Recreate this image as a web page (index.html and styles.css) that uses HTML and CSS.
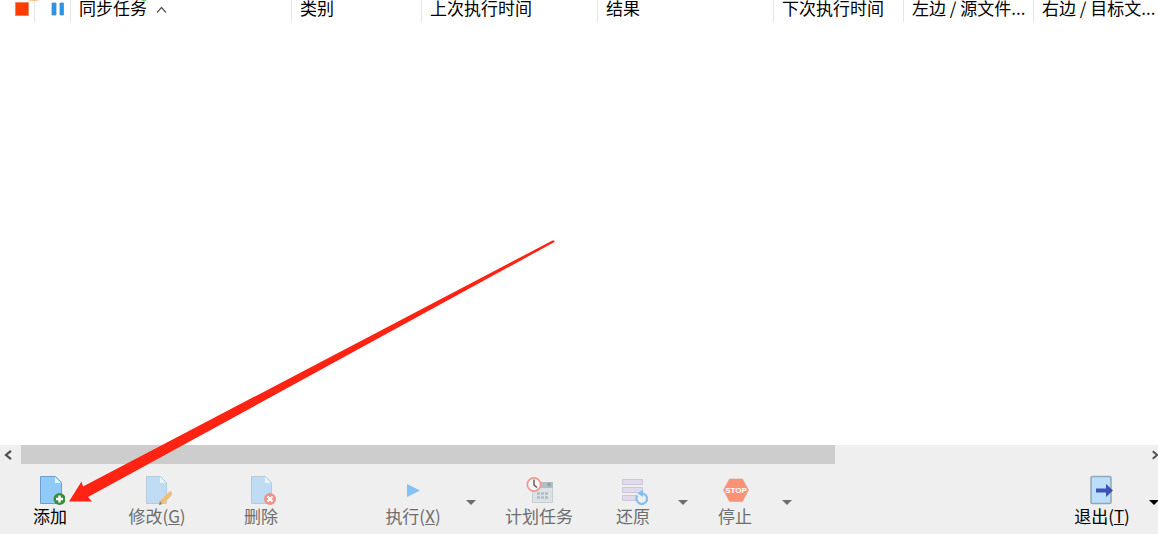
FILE: index.html
```html
<!DOCTYPE html>
<html lang="zh-CN">
<head>
  <meta charset="UTF-8">
  <meta name="viewport" content="width=device-width, initial-scale=1.0">
  <title>同步任务</title>
  <link rel="stylesheet" href="styles.css">
</head>
<body>
<div class="window">
  <div class="task-list">
    <table class="tasks">
      <colgroup>
        <col class="col-stop"><col class="col-pause"><col class="col-name"><col class="col-type"><col class="col-time"><col class="col-time"><col class="col-side"><col class="col-side"><col>
      </colgroup>
      <thead>
        <tr>
          <th class="mark-cell"><svg class="mark" width="14" height="14" viewBox="0 0 14 14"><path fill="#ff3d00" stroke="#d9735a" stroke-width=".6" d="M.5 .5h13v13H.5z"/></svg></th>
          <th class="mark-cell"><svg class="mark" width="14" height="14" viewBox="0 0 14 14"><path fill="#2196f3" stroke="#5c8cae" stroke-width=".8" d="M2 1h4v12H2zM10 1h3.500v12H10z"/></svg></th>
          <th>同步任务<svg class="sort" width="11" height="8" viewBox="0 0 11 8"><path fill="none" stroke="#555" stroke-width="1.200" d="M1 6.500l4.500-5 4.500 5"/></svg></th>
          <th>类别</th>
          <th>上次执行时间</th>
          <th>结果</th>
          <th>下次执行时间</th>
          <th>左边 / 源文件...</th>
          <th>右边 / 目标文...</th>
        </tr>
      </thead>
    </table>
    <svg class="scraps" width="160" height="3" viewBox="0 0 160 3">
      <path fill="#ffbd80" d="M27 0h13q-6 2-13 0z"/>
      <path fill="#79cf70" d="M141 0h6l-3 2z"/>
    </svg>
  </div>

  <div class="scrollbar">
    <button class="scroll-button" aria-label="向左"><svg width="8" height="10" viewBox="0 0 8 10"><path fill="none" stroke="#505050" stroke-width="2.200" d="M7 .8L2 5l5 4.200"/></svg></button>
    <div class="track"><div class="thumb"></div></div>
    <button class="scroll-button scroll-right" aria-label="向右"><svg width="8" height="10" viewBox="0 0 8 10"><path fill="none" stroke="#505050" stroke-width="2.200" d="M2 .8L7 5 2 9.200"/></svg></button>
  </div>

  <div class="toolbar">
    <button class="tool tool-add">
      <svg class="icon" viewBox="0 0 30 30"><path fill="#90caf9" stroke="#6f9fc8" d="M5.500 1.500h15l6 6v21h-21z"/><path fill="#e1f5fe" d="M20 2v6h6z"/><circle cx="24.500" cy="24" r="6" fill="#388e3c"/><path stroke="#fff" stroke-width="2.400" d="M24.500 20.500v7M21 24h7"/></svg>
      <span>添加</span>
    </button>
    <button class="tool tool-edit" disabled>
      <svg class="icon" viewBox="0 0 30 30"><path fill="#bfdcf4" stroke="#b3cbdd" d="M4.500 1.500h14l6 6v21h-20z"/><path fill="#e9f6fd" d="M18 2v6h6z"/><path fill="#f3bd6c" d="M18 26l9-9 3 3-9 9-4 1z"/><path fill="#efa7a2" d="M27 17l1.500-1 2 2.500-.5 1.500z"/><path fill="#7d878c" d="M18 26l-1 4 3-1z"/></svg>
      <span>修改(<u>G</u>)</span>
    </button>
    <button class="tool tool-delete" disabled>
      <svg class="icon" viewBox="0 0 30 30"><path fill="#bfdcf4" stroke="#b3cbdd" d="M5.500 1.500h14l6 6v21h-20z"/><path fill="#e9f6fd" d="M19 2v6h6z"/><circle cx="24" cy="24" r="6" fill="#f1918b"/><path stroke="#fff" stroke-width="2.200" d="M21.500 21.500l5 5M26.500 21.500l-5 5"/></svg>
      <span>删除</span>
    </button>
    <button class="tool tool-run" disabled>
      <svg class="icon" viewBox="0 0 30 30"><path fill="#82c2f4" d="M9 9l13 6.500L9 22z"/></svg>
      <span>执行(<u>X</u>)</span>
    </button>
    <button class="drop" disabled aria-label="执行选项"></button>
    <button class="tool tool-plan" disabled>
      <svg class="icon" viewBox="0 0 30 30"><path fill="#dce3e6" stroke="#c5ced2" d="M8.500 7.500h20v20h-20z"/><path fill="#b0bec5" d="M8 7h21v6H8z"/><circle cx="25" cy="9.500" r="2" fill="#93a3ab"/><path stroke="#aebbc1" stroke-width="2.500" stroke-dasharray="3 1" d="M13 18.500h11M13 22.500h11"/><circle cx="10" cy="9.500" r="6.700" fill="#f5f5f5" stroke="#ee9993" stroke-width="1.800"/><path fill="none" stroke="#555" stroke-width="1.400" d="M10 4.500V10l3 2.500"/></svg>
      <span>计划任务</span>
    </button>
    <button class="tool tool-restore" disabled>
      <svg class="icon" viewBox="0 0 30 30"><path fill="#e1daed" stroke="#cdc5dc" d="M4.500 4.500h20v5h-20zM4.500 12.500h20v5h-20zM4.500 20.500h20v5h-20z"/><circle cx="24" cy="23.500" r="5.500" fill="#efefef"/><path fill="none" stroke="#81c0ee" stroke-width="2.200" d="M19.500 20.500a5.300 5.300 0 1 0 5.500-2"/><path fill="#81c0ee" d="M25 14.500v7.500l-5.500-3.500z"/></svg>
      <span>还原</span>
    </button>
    <button class="drop" disabled aria-label="还原选项"></button>
    <button class="tool tool-stop" disabled>
      <svg class="icon" viewBox="0 0 30 30"><path fill="#fa9275" stroke="#dca08f" stroke-width=".6" d="M9.500 4h13l6 11-6 11.500h-13L3.500 15z"/><text class="stop-text" x="16" y="18" text-anchor="middle">STOP</text></svg>
      <span>停止</span>
    </button>
    <button class="drop" disabled aria-label="停止选项"></button>
    <button class="tool tool-exit">
      <svg class="icon" viewBox="0 0 30 30"><rect x="4" y="1.500" width="20" height="27" rx="1.500" fill="#bbdefb" stroke="#8fa9b9" stroke-width="1.500"/><path fill="#3f51b5" d="M9 13.500h10V9l7 6.500-7 6.500v-4.500H9z"/></svg>
      <span>退出(<u>T</u>)</span>
    </button>
    <button class="drop drop-exit" aria-label="退出选项"></button>
  </div>

  <svg class="pointer" width="486" height="264" viewBox="69 239 486 264">
    <path fill="#ff2314" d="M69 501.500L81.500 481.500 83 486.500 552.500 240.500Q555 240 554.500 242L88 497 92 501.500z"/>
  </svg>
</div>
</body>
</html>
```
FILE: styles.css
```css
* {
  box-sizing: border-box;
}
body {
  margin: 0;
  background: #fff;
  color: #000;
  font-family: "Noto Sans CJK SC", sans-serif;
  font-size: 17px;
}
button {
  margin: 0;
  padding: 0;
  border: 0;
  background: none;
  color: inherit;
  font: inherit;
}
.window {
  position: relative;
  display: flex;
  flex-direction: column;
  height: 100vh;
  overflow: hidden;
}

/* task list */
.task-list {
  position: relative;
  flex: 1;
}
.tasks {
  width: 100%;
  table-layout: fixed;
  border-collapse: separate;
  border-spacing: 0;
}
.tasks th {
  height: 22px;
  padding: 0 0 6px 8px;
  border-right: 1px solid #e5e5e5;
  font-weight: normal;
  line-height: 16px;
  text-align: left;
  vertical-align: top;
  white-space: nowrap;
}
.tasks th:last-child {
  border-right: 0;
}
.tasks .mark-cell {
  padding-left: 15px;
}
.col-stop {
  width: 35px;
}
.col-pause {
  width: 36px;
}
.col-name {
  width: 221px;
}
.col-type,
.col-side {
  width: 130px;
}
.col-time {
  width: 176px;
}
.mark {
  display: block;
  margin-top: 2px;
}
.sort {
  margin-left: 9px;
  vertical-align: 1px;
}
.scraps {
  position: absolute;
  top: 0;
  left: 0;
}

/* horizontal scrollbar */
.scrollbar {
  display: flex;
  height: 20px;
  background: #efefef;
}
.scroll-button {
  display: flex;
  align-items: center;
  width: 21px;
  padding-left: 4px;
}
.scroll-right {
  width: 7px;
  padding-left: 0;
}
.track {
  flex: 1;
}
.thumb {
  width: 72%;
  height: 19px;
  background: #cdcdcd;
}

/* toolbar */
.toolbar {
  display: flex;
  height: 69px;
  padding-top: 10px;
  background: #efefef;
}
.tool {
  display: flex;
  flex: none;
  flex-direction: column;
  align-items: center;
  width: 80px;
  height: 54px;
  line-height: 22px;
  white-space: nowrap;
}
.tool:disabled {
  color: #6d6d6d;
}
.icon {
  width: 30px;
  height: 30px;
}
.tool-add {
  width: 100px;
}
.tool-edit {
  width: 114px;
}
.tool-delete {
  width: 94px;
}
.tool-run {
  width: 92px;
  margin-left: 59px;
}
.tool-plan {
  width: 112px;
}
.tool-restore {
  width: 76px;
}
.tool-exit {
  margin-left: auto;
}
.stop-text {
  fill: #fff;
  font-family: "Liberation Sans", sans-serif;
  font-size: 8px;
  font-weight: bold;
}
.drop {
  display: flex;
  flex: none;
  align-items: center;
  justify-content: center;
  width: 24px;
  height: 54px;
}
.drop::before {
  border: 5px solid transparent;
  border-top-color: #000;
  border-bottom: 0;
  content: "";
}
.drop:disabled::before {
  border-top-color: #6d6d6d;
}
.drop-exit {
  margin-right: -8px;
}

/* red arrow over the list */
.pointer {
  position: absolute;
  top: 239px;
  left: 69px;
  pointer-events: none;
}
```
